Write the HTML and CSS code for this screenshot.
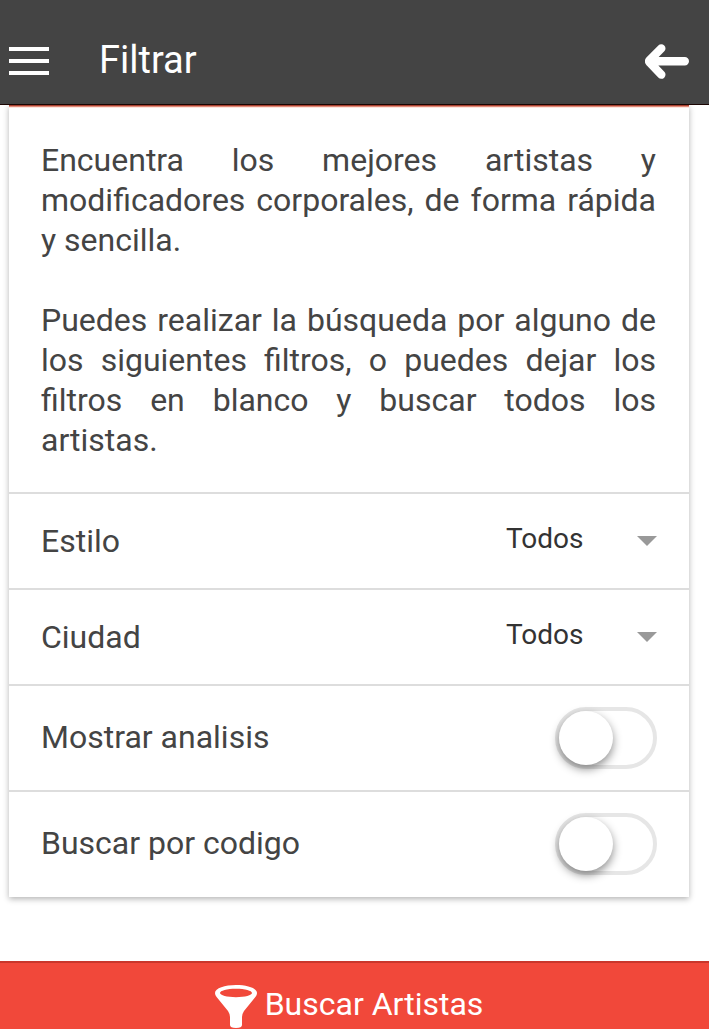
FILE: index.html
```html
<!DOCTYPE html>
<html lang="es">
<head>
<meta charset="utf-8">
<title>Filtrar</title>
<link rel="stylesheet" href="styles.css">
</head>
<body>
<div class="app">
  <header class="bar">
    <svg class="menu" width="40" height="29" viewBox="0 0 40 29"><path d="M0 2h40M0 14h40M0 26h40" stroke="#fff" stroke-width="4"/></svg>
    <h1 class="title">Filtrar</h1>
    <svg class="back" width="44" height="36" viewBox="0 0 44 36"><path d="M5 17.300H39.800M16.300 4.400L4.600 16.200Q3.700 17.300 4.600 18.400L16.300 30.600" fill="none" stroke="#fff" stroke-width="8.400" stroke-linecap="round" stroke-linejoin="round"/></svg>
  </header>
  <main class="content">
    <section class="card">
      <div class="accent"></div>
      <div class="intro">
        <p>Encuentra los mejores artistas y modificadores corporales, de forma rápida y sencilla.</p>
        <p>Puedes realizar la búsqueda por alguno de los siguientes filtros, o puedes dejar los filtros en blanco y buscar todos los artistas.</p>
      </div>
      <div class="row"><span class="label">Estilo</span><span class="value">Todos</span><i class="caret"></i></div>
      <div class="row"><span class="label">Ciudad</span><span class="value">Todos</span><i class="caret"></i></div>
      <div class="row tall"><span class="label">Mostrar analisis</span><span class="toggle"><i class="knob"></i></span></div>
      <div class="row tall"><span class="label">Buscar por codigo</span><span class="toggle"><i class="knob"></i></span></div>
    </section>
  </main>
  <footer class="search">
    <svg class="funnel" width="42" height="44" viewBox="0 0 42 44"><path fill="#fff" fill-rule="evenodd" d="M0 8C0 3 10 0 21 0s21 3 21 8c0 2-1 3-2 4.500L29 26q-2 3-2 6v8q0 3-6 3t-6-3v-8q0-3-2-6L2 12.500C1 11 0 10 0 8zM5 8c0 2.200 7 4.200 16 4.200S37 10.200 37 8 30 3.800 21 3.800 5 5.800 5 8z"/></svg>
    <span>Buscar Artistas</span>
  </footer>
</div>
</body>
</html>
```
FILE: styles.css
```css
* { box-sizing: border-box; }
body { margin: 0; background: #fff; font-family: Roboto, sans-serif; color: #444; }
.app { width: 709px; height: 1029px; display: flex; flex-direction: column; background: #fff; overflow: hidden; }
.bar { height: 105px; flex: none; display: flex; align-items: flex-start; padding: 0 20px 0 9px; background: #444; border-bottom: 1px solid #1a0503; }
.menu { margin-top: 47px; }
.title { margin: 36px 0 0 50px; font-size: 38px; line-height: 48px; font-weight: 400; color: #fff; }
.back { margin: 44px 0 0 auto; }
.content { flex: 1; padding: 0 20px 0 9px; }
.card { height: 792px; background: #fff; box-shadow: 0 2px 6px rgba(0, 0, 0, .3); }
.accent { height: 3px; background: linear-gradient(#a8402f 0 1px, #e08a78 1px 2px, #fce4de 2px); }
.intro { height: 384px; padding: 32px 33px 0 32px; font-size: 32px; line-height: 40px; text-align: justify; }
.intro p { margin: 0 0 40px; }
.row { height: 96px; display: flex; align-items: center; padding: 0 32px; border-top: 2px solid #ddd; font-size: 32px; }
.tall { height: 106px; }
.label { flex: 1; }
.tall .label { margin-top: -2px; }
.value { width: 131px; margin-top: -6px; font-size: 28px; color: #333; }
.caret { border: 10px solid transparent; border-top-color: #999; border-bottom: 0; }
.toggle { width: 102px; height: 62px; border: 4px solid #e6e6e6; border-radius: 31px; margin-top: -1px; }
.knob { display: block; width: 54px; height: 54px; border-radius: 50%; background: #fff; box-shadow: 0 4px 10px rgba(0, 0, 0, .45); }
.search { height: 68px; flex: none; display: flex; justify-content: center; gap: 8px; padding: 22px 11px 0 0; background: #f1483a; border-top: 2px solid #c9362b; font-size: 32px; line-height: 38px; color: #fff; }
```
